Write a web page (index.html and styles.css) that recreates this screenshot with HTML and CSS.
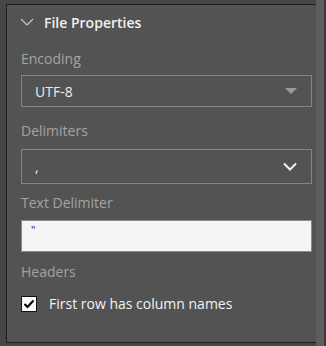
FILE: index.html
```html
<!DOCTYPE html>
<html lang="en">

<head>
  <meta charset="UTF-8" />
  <title>File Properties</title>
  <link rel="stylesheet" href="styles.css">
</head>

<body>
  <div class="frame">
    <div class="panel">

      <div class="section-head">
        <svg class="chevron" width="14" height="8" viewBox="0 0 14 8">
          <path d="M1 1 L7 7 L13 1" fill="none" stroke="#c8c8c8" stroke-width="1.2" />
        </svg>
        <span>File Properties</span>
      </div>

      <div class="label label-encoding">Encoding</div>
      <div class="selectbox select-encoding">
        <span>UTF-8</span>
        <svg width="12" height="6" viewBox="0 0 12 6">
          <path d="M0 0 L12 0 L6 6 Z" fill="#9b9b9b" />
        </svg>
      </div>

      <div class="label label-delim">Delimiters</div>
      <div class="selectbox select-delim">
        <span>,</span>
        <svg width="14" height="9" viewBox="0 0 14 9">
          <path d="M1 1.5 L7 7.5 L13 1.5" fill="none" stroke="#f2f2f2" stroke-width="2" />
        </svg>
      </div>

      <div class="label label-text">Text Delimiter</div>
      <div class="textbox">"</div>

      <div class="label label-headers">Headers</div>
      <div class="check-row">
        <span class="checkbox">
          <svg width="12" height="10" viewBox="0 0 12 10">
            <path d="M1.5 5 L4.5 8 L10.5 1.5" fill="none" stroke="#000" stroke-width="2.2" />
          </svg>
        </span>
        <span>First row has column names</span>
      </div>

    </div>
    <div class="scrollbar"></div>
  </div>
</body>

</html>
```

FILE: styles.css
```css
body {
  margin: 0;
  background: #464646;
  font-family: 'Open Sans', 'Noto Sans', sans-serif;
  height: 346px;
  overflow: hidden;
}

.frame {
  display: flex;
  height: 346px;
  padding-left: 6px;
  padding-right: 2px;
  box-sizing: border-box;
  background: linear-gradient(to right, #464646 316px, #3c3c3c 316px);
}

.panel {
  flex: 1;
  margin-top: 4px;
  height: 339px;
  box-sizing: border-box;
  background: #535353;
  border-top: 1px solid #1e1e1e;
  border-left: 1px solid #1e1e1e;
  border-bottom: 1px solid #1e1e1e;
  padding: 0 4px 0 14px;
}

.scrollbar {
  width: 8px;
  background: #5e5e5e;
}

.section-head {
  height: 34px;
  display: flex;
  align-items: center;
  color: #f0f0f0;
  font-size: 14px;
  font-weight: 600;
}

.chevron {
  margin-left: -1px;
  margin-right: 10px;
}

.label {
  height: 26px;
  line-height: 26px;
  color: #a3a3a3;
  font-size: 14px;
}

.label-encoding {
  margin-top: 7px;
}

.label-delim {
  margin-top: 11px;
}

.label-text {
  margin-top: 6px;
}

.label-headers {
  margin-top: 7px;
}

.selectbox {
  display: flex;
  align-items: center;
  justify-content: space-between;
  box-sizing: border-box;
  border: 1px solid #858585;
  padding: 0 14px 0 13px;
  color: #ececec;
  font-size: 14px;
}

.select-encoding {
  height: 32px;
  margin-top: 3px;
}

.select-delim {
  height: 35px;
  margin-top: 5px;
}

.textbox {
  height: 32px;
  margin-top: 4px;
  box-sizing: border-box;
  border: 1px solid #8a8a8a;
  background: #f5f5f5;
  color: #222;
  font-size: 11px;
  line-height: 18px;
  padding-left: 9px;
}

.check-row {
  margin-top: 10px;
  height: 17px;
  display: flex;
  align-items: center;
  color: #f2f2f2;
  font-size: 14px;
}

.checkbox {
  width: 16px;
  height: 16px;
  box-sizing: border-box;
  border: 1px solid #111;
  background: #fafafa;
  display: flex;
  align-items: center;
  justify-content: center;
  margin-right: 12px;
}
```
